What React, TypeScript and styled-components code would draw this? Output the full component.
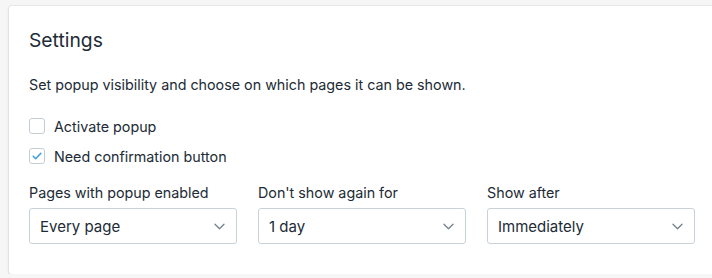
import React from 'react'
import styled, { createGlobalStyle } from 'styled-components'

const GlobalStyle = createGlobalStyle`
  body {
    margin: 0;
    background: #f6f6f7;
    font-family: Inter, "Noto Sans", sans-serif;
    color: #212b36;
    overflow: hidden;
  }
`

const Page = styled.div`
  padding: 6px 0 0 9px;
`

const Card = styled.section`
  width: 706px;
  background: #fff;
  box-shadow: 0 0 0 1px rgba(63, 63, 68, 0.05), 0 1px 3px 0 rgba(63, 63, 68, 0.15);
  border-radius: 3px;
  padding: 20px 20px 30px;
  box-sizing: border-box;
`

const Title = styled.h2`
  margin: 0;
  font-size: 19.3px;
  line-height: 28px;
  font-weight: 400;
`

const Description = styled.p`
  margin: 21px 0 21px;
  font-size: 14.3px;
  line-height: 20px;
`

const CheckRow = styled.label`
  display: flex;
  align-items: center;
  gap: 9px;
  height: 30px;
  margin-top: -5px;
  font-size: 14.3px;
  & + & {
    margin-top: 0;
  }
`

const Box = styled.span<{ $checked?: boolean }>`
  width: 16px;
  height: 16px;
  box-sizing: border-box;
  border: 1px solid #c4cdd5;
  border-radius: 3px;
  background: #fff;
  display: flex;
  align-items: center;
  justify-content: center;
  color: #47a3dc;
`

const Fields = styled.div`
  display: grid;
  grid-template-columns: repeat(3, 208px);
  column-gap: 21px;
  margin-top: 12px;
`

const Field = styled.div`
  display: flex;
  flex-direction: column;
  gap: 5px;
`

const Label = styled.span`
  font-size: 14.3px;
  line-height: 20px;
`

const Select = styled.div`
  height: 36px;
  box-sizing: border-box;
  border: 1px solid #c9d1d9;
  border-radius: 3px;
  display: flex;
  align-items: center;
  justify-content: space-between;
  padding: 0 11px 0 10px;
  font-size: 15px;
`

const Chevron = () => (
  <svg width="11" height="7" viewBox="0 0 11 7" fill="none">
    <path d="M1 1.2l4.5 4.5 4.5-4.5" stroke="#75818d" strokeWidth="1.3" strokeLinecap="round" strokeLinejoin="round" />
  </svg>
)

const Check = () => (
  <svg width="10" height="8" viewBox="0 0 10 8" fill="none">
    <path d="M1.2 4.2l2.5 2.5L8.8 1.4" stroke="currentColor" strokeWidth="1.6" strokeLinecap="round" strokeLinejoin="round" />
  </svg>
)

const fields = [
  { label: 'Pages with popup enabled', value: 'Every page' },
  { label: "Don't show again for", value: '1 day' },
  { label: 'Show after', value: 'Immediately' },
]

export default function App() {
  return (
    <Page>
      <GlobalStyle />
      <Card>
        <Title>Settings</Title>
        <Description>Set popup visibility and choose on which pages it can be shown.</Description>
        <CheckRow>
          <Box />
          Activate popup
        </CheckRow>
        <CheckRow>
          <Box $checked>
            <Check />
          </Box>
          Need confirmation button
        </CheckRow>
        <Fields>
          {fields.map(f => (
            <Field key={f.label}>
              <Label>{f.label}</Label>
              <Select>
                {f.value}
                <Chevron />
              </Select>
            </Field>
          ))}
        </Fields>
      </Card>
    </Page>
  )
}
